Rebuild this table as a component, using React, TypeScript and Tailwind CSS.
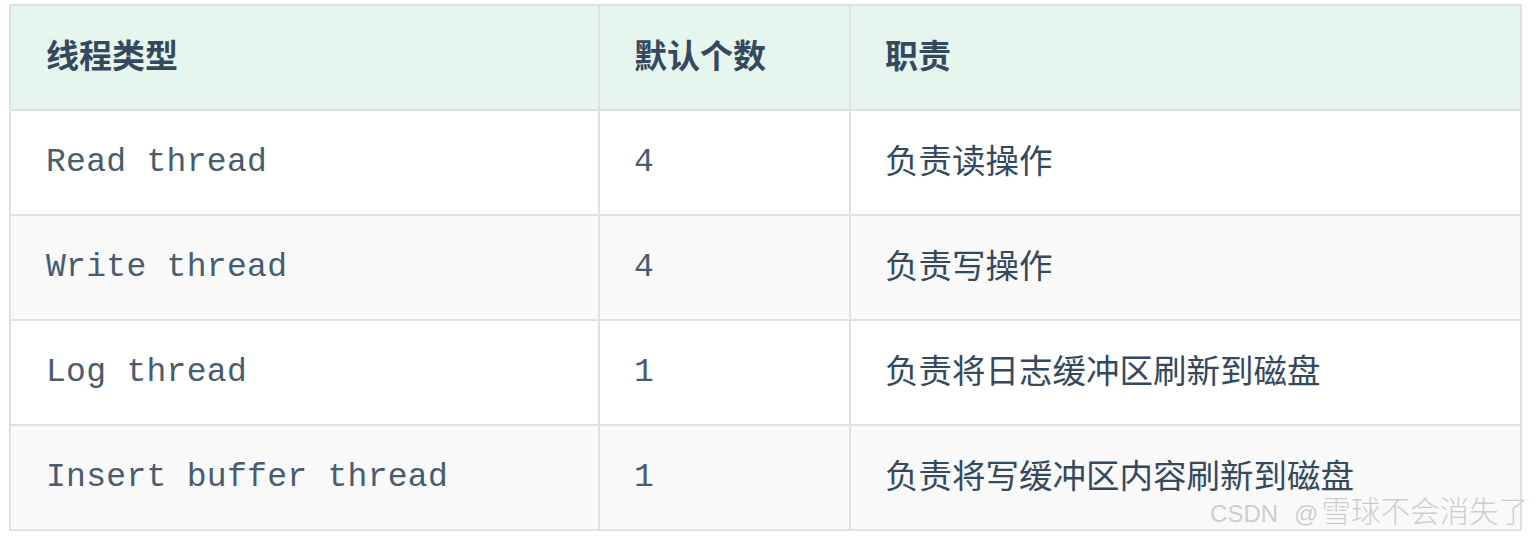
const rows = [
  { name: 'Read thread', count: '4', duty: '负责读操作' },
  { name: 'Write thread', count: '4', duty: '负责写操作' },
  { name: 'Log thread', count: '1', duty: '负责将日志缓冲区刷新到磁盘' },
  { name: 'Insert buffer thread', count: '1', duty: '负责将写缓冲区内容刷新到磁盘' },
]

const cjk = { fontFamily: '"Noto Sans CJK SC", "Noto Sans", sans-serif' }
const mono = { fontFamily: '"Liberation Mono", "Noto Sans CJK SC", monospace' }

export default function App() {
  return (
    <div className="relative h-[538px] w-[1536px] bg-white pl-[9px] pt-[4px] text-[#34495e]">
      <div className="w-[1513px] border-2 border-[#dfe2e5]">
        <div className="grid h-[103px] grid-cols-[587px_251px_671px] bg-[#e6f6ef] text-[33px] font-bold" style={cjk}>
          <div className="flex items-center pb-[6px] pl-[35px]">线程类型</div>
          <div className="flex items-center border-l-2 border-[#dfe2e5] pb-[6px] pl-[34px]">默认个数</div>
          <div className="flex items-center border-l-2 border-[#dfe2e5] pb-[6px] pl-[34px]">职责</div>
        </div>
        {rows.map((r, i) => (
          <div
            key={r.name}
            className={`grid h-[105px] grid-cols-[587px_251px_671px] border-t-2 border-[#dfe2e5] ${i % 2 === 1 ? 'bg-[#f9f9f9]' : 'bg-white'}`}
          >
            <div className="flex items-center pl-[35px] text-[33px] tracking-[0.3px] text-[#485c70]" style={mono}>{r.name}</div>
            <div className="flex items-center border-l-2 border-[#dfe2e5] pl-[34px] text-[33px] text-[#485c70]" style={mono}>{r.count}</div>
            <div className="flex items-center border-l-2 border-[#dfe2e5] pb-[6px] pl-[34px] text-[33.5px]" style={cjk}>{r.duty}</div>
          </div>
        ))}
      </div>
      <div
        className="absolute bottom-[6px] right-[8px] flex items-baseline whitespace-nowrap text-[#cdcdcd] [text-shadow:0_0_1px_#ffffff]"
        style={cjk}
      >
        <span className="mr-[16px] text-[24px]" style={{ fontFamily: '"Liberation Sans", sans-serif' }}>CSDN</span>
        <span className="mr-[3px] text-[24px]" style={{ fontFamily: '"Liberation Sans", sans-serif' }}>@</span>
        <span className="text-[29.5px] font-light leading-none">雪球不会消失了</span>
      </div>
    </div>
  )
}
